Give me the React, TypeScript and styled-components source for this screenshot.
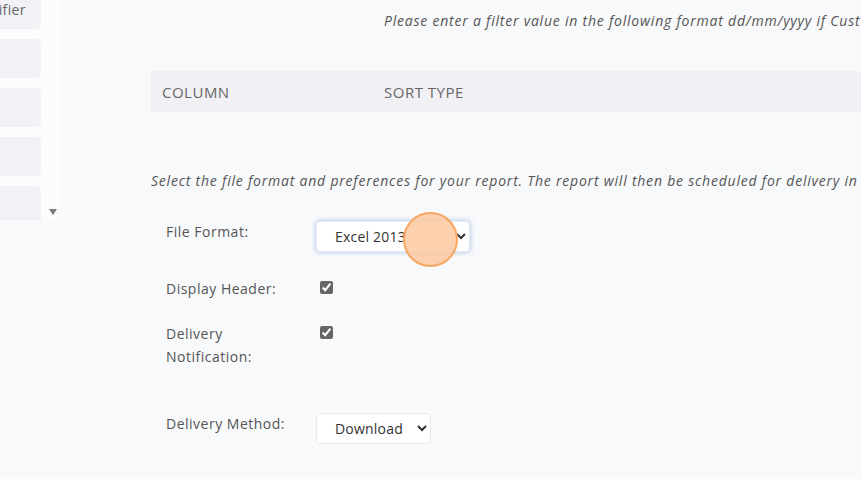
import styled, { createGlobalStyle } from 'styled-components'

const GlobalStyle = createGlobalStyle`
  html, body {
    margin: 0;
    padding: 0;
    background: #f8f9fb;
    font-family: 'Open Sans', 'Liberation Sans', sans-serif;
    color: #4a4a4a;
    overflow: hidden;
  }
`

const Page = styled.div`
  position: relative;
  display: flex;
  flex-flow: row;
  width: 861px;
  height: 479px;
  overflow: hidden;
`

const Sidebar = styled.aside`
  display: flex;
  flex-flow: row;
  flex: none;
  width: 60px;
  height: 220px;
  background: #fcfcfd;
  overflow: hidden;
`

const SideList = styled.div`
  display: flex;
  flex-flow: column;
  gap: 10px;
  width: 41px;
  margin-top: -10px;
`

const SideItem = styled.div`
  display: flex;
  justify-content: flex-end;
  align-items: center;
  flex: none;
  height: 39px;
  padding-right: 15px;
  background: #f2f2f6;
  border-radius: 0 5px 5px 0;
  font-size: 14px;
  letter-spacing: 0.4px;
  color: #666;
  white-space: nowrap;
  overflow: hidden;
`

const ScrollTrack = styled.div`
  display: flex;
  flex-flow: column;
  justify-content: flex-end;
  align-items: center;
  flex: 1;
  padding-bottom: 4px;

  svg {
    margin-left: 4px;
  }
`

const Main = styled.main`
  display: flex;
  flex-flow: column;
  flex: 1;
  min-width: 0;
  padding-left: 91px;
`

const Hint = styled.p<{ $indent?: number; $top?: number }>`
  margin: ${p => p.$top ?? 0}px 0 0;
  padding-left: ${p => p.$indent ?? 0}px;
  font-size: 14px;
  font-style: italic;
  letter-spacing: 0.78px;
  color: #555;
  line-height: 20px;
  white-space: nowrap;
`

const TableHead = styled.div`
  display: grid;
  grid-template-columns: 222px 1fr;
  align-items: center;
  height: 41px;
  padding: 0 11px;
  margin: 40px 0 59px;
  background: #f1f1f5;
  font-size: 15px;
  letter-spacing: 0.5px;
  color: #666;
`

const Form = styled.div`
  display: flex;
  flex-flow: column;
  padding-left: 15px;
`

const Row = styled.div<{ $top: number }>`
  display: grid;
  grid-template-columns: 150px 1fr;
  align-items: start;
  margin-top: ${p => p.$top}px;
`

const Label = styled.label`
  width: 135px;
  font-size: 14px;
  letter-spacing: 0.5px;
  line-height: 23px;
  color: #555;
`

const Select = styled.select<{ $focus?: boolean; $width: number }>`
  width: ${p => p.$width}px;
  height: 31px;
  margin-top: 1px;
  padding: 0 8px 0 14px;
  background: #fff;
  border: 1px solid #e8e9ee;
  border-radius: 4px;
  font-family: 'Open Sans', 'Liberation Sans', sans-serif;
  font-size: 14px;
  letter-spacing: 0.2px;
  color: #333;
  box-shadow: ${p => (p.$focus ? '0 0 4px 1px rgba(120, 160, 220, 0.45)' : 'none')};
  outline: none;
`

const Check = styled.input`
  width: 13px;
  height: 13px;
  margin: 4px 0 0 4px;
  accent-color: #666;
`

const Cursor = styled.div`
  position: absolute;
  left: 403px;
  top: 212px;
  width: 51px;
  height: 51px;
  border-radius: 50%;
  background: rgba(253, 200, 160, 0.85);
  border: 2px solid #f6a762;
  pointer-events: none;
`

export default function App() {
  return (
    <>
      <GlobalStyle />
      <Page>
        <Sidebar>
          <SideList>
            <SideItem>Identifier</SideItem>
            <SideItem />
            <SideItem />
            <SideItem />
            <SideItem />
          </SideList>
          <ScrollTrack>
            <svg width="8" height="7" viewBox="0 0 8 7">
              <path d="M0 0 H8 L4 6 Z" fill="#777" />
            </svg>
          </ScrollTrack>
        </Sidebar>

        <Main>
          <Hint $indent={233} $top={11}>
            Please enter a filter value in the following format dd/mm/yyyy if Custom Date Range is selected
          </Hint>

          <TableHead>
            <span>COLUMN</span>
            <span>SORT TYPE</span>
          </TableHead>

          <Hint>
            Select the file format and preferences for your report. The report will then be scheduled for delivery in the queue
          </Hint>

          <Form>
            <Row $top={29}>
              <Label>File Format:</Label>
              <Select $focus $width={154} defaultValue="xlsx">
                <option value="xlsx">Excel 2013</option>
                <option value="csv">CSV</option>
                <option value="pdf">PDF</option>
              </Select>
            </Row>

            <Row $top={25}>
              <Label>Display Header:</Label>
              <Check type="checkbox" defaultChecked />
            </Row>

            <Row $top={22}>
              <Label>Delivery Notification:</Label>
              <Check type="checkbox" defaultChecked />
            </Row>

            <Row $top={44}>
              <Label>Delivery Method:</Label>
              <Select $width={115} defaultValue="download">
                <option value="download">Download</option>
                <option value="email">Email</option>
              </Select>
            </Row>
          </Form>
        </Main>

        <Cursor />
      </Page>
    </>
  )
}
